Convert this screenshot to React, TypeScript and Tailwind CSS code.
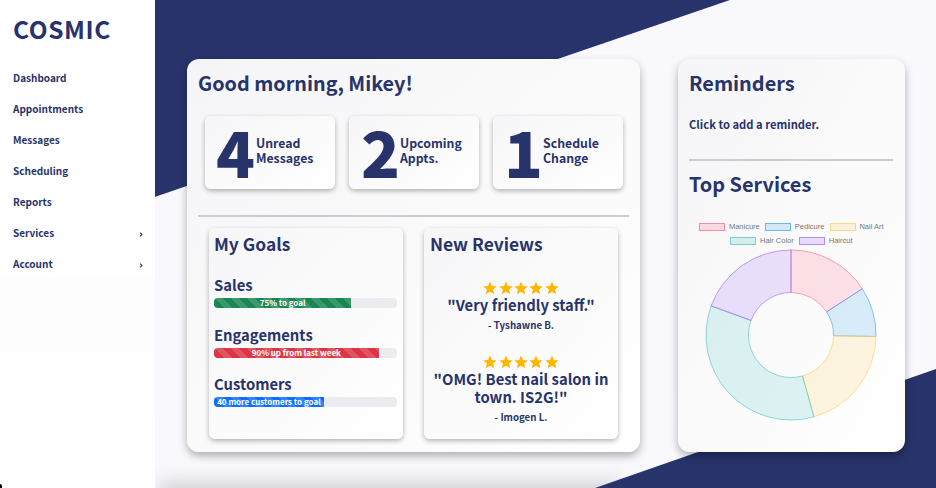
const navItems = ['Dashboard', 'Appointments', 'Messages', 'Scheduling', 'Reports', 'Services', 'Account']

const stats = [
  { num: '4', label: 'Unread Messages', pad: 'pl-[11px]', gap: 'gap-[1px]' },
  { num: '2', label: 'Upcoming Appts.', pad: 'pl-[12px]', gap: 'gap-0' },
  { num: '1', label: 'Schedule Change', pad: 'pl-[11px]', gap: 'gap-0' },
]

const goals = [
  { name: 'Sales', text: '75% to goal', fill: 'w-[75%] bg-[#198754]' },
  { name: 'Engagements', text: '90% up from last week', fill: 'w-[90%] bg-[#dc3545]' },
  { name: 'Customers', text: '40 more customers to goal', fill: 'w-[60%] bg-[#0d6efd]' },
]

const reviews = [
  { quote: '"Very friendly staff."', by: '- Tyshawne B.' },
  { quote: '"OMG! Best nail salon in town. IS2G!"', by: '- Imogen L.' },
]

const legend = [
  { name: 'Manicure', box: 'bg-[#ff638433] border-[#ff6384aa]' },
  { name: 'Pedicure', box: 'bg-[#36a2eb33] border-[#36a2ebaa]' },
  { name: 'Nail Art', box: 'bg-[#ffce5633] border-[#ffce56aa]' },
  { name: 'Hair Color', box: 'bg-[#4bc0c033] border-[#4bc0c0aa]' },
  { name: 'Haircut', box: 'bg-[#9966ff33] border-[#9966ffaa]' },
]

const slices = [
  { from: 0, to: 57, fill: '#ff6384' },
  { from: 57, to: 91, fill: '#36a2eb' },
  { from: 91, to: 164.3, fill: '#ffce56' },
  { from: 164.3, to: 290, fill: '#4bc0c0' },
  { from: 290, to: 360, fill: '#9966ff' },
]

const point = (r: number, deg: number) => {
  const a = (deg * Math.PI) / 180
  return `${(86 + r * Math.sin(a)).toFixed(2)} ${(86 - r * Math.cos(a)).toFixed(2)}`
}

const slicePath = (from: number, to: number) => {
  const large = to - from > 180 ? 1 : 0
  return `M${point(85, from)} A85 85 0 ${large} 1 ${point(85, to)} L${point(42.5, to)} A42.5 42.5 0 ${large} 0 ${point(42.5, from)} Z`
}

const Star = () => (
  <svg viewBox="0 0 24 24" className="w-[14px] h-[14px]" fill="#ffb703">
    <path d="M12 1l3.3 7.6 8.2.7-6.2 5.4 1.9 8L12 18.5 4.8 22.7l1.9-8L.5 9.3l8.2-.7z" />
  </svg>
)

const Stars = () => (
  <div className="flex justify-center gap-[1.3px]">
    <Star />
    <Star />
    <Star />
    <Star />
    <Star />
  </div>
)

const Chevron = () => (
  <svg viewBox="0 0 6 8" className="w-[4px] h-[5px] mt-[4px]" fill="none" stroke="#27336a" strokeWidth="1.8">
    <path d="M1.5 1l3 3-3 3" />
  </svg>
)

const App = () => {
  return (
    <div className="relative flex w-[936px] h-[488px] overflow-hidden bg-[#f9f9fd] text-[#27336a] font-['Noto_Sans_CJK_JP','Source_Sans_Pro',sans-serif]">
      <div className="absolute left-[165px] right-[320px] bottom-[-16px] h-[16px] shadow-[0_0_20px_6px_rgba(0,0,0,0.16)]" />
      <svg className="absolute inset-0" width="936" height="488" viewBox="0 0 936 488">
        <polygon points="0,250 730,0 0,0" fill="#27336a" />
        <polygon points="595,488 936,369 936,488" fill="#27336a" />
      </svg>

      <aside className="relative w-[155px] h-full shrink-0 bg-gradient-to-b from-[#fafafa] to-white">
        <div className="h-[278px] bg-white">
          <div className="pl-[13px] pt-[11px] text-[24.5px] leading-[36px] font-bold tracking-[0.6px]">COSMIC</div>
          <nav className="mt-[15px] pl-[13px] pr-[12px]">
            {navItems.map((item) => (
              <div key={item} className="flex items-center justify-between h-[31px] text-[10px] font-semibold">
                {item}
                {(item === 'Services' || item === 'Account') && <Chevron />}
              </div>
            ))}
          </nav>
        </div>
        <div className="absolute left-0 bottom-0 w-[2px] h-[4px] rounded-tr-[2px] bg-black" />
      </aside>

      <main className="relative flex gap-[38px] pl-[32px] pt-[59px]">
        <section className="w-[453px] h-[393px] px-[11px] rounded-[12px] bg-gradient-to-br from-[#f5f5f7] to-white shadow-[0_4px_8px_rgba(0,0,0,0.3)]">
          <h1 className="pt-[8px] text-[19.8px] leading-[32px] font-semibold">Good morning, Mikey!</h1>
          <div className="flex gap-[14.5px] mt-[17px] pl-[7px]">
            {stats.map((s) => (
              <div
                key={s.num}
                className={`flex items-center w-[129.5px] h-[73px] rounded-[6px] bg-gradient-to-br from-[#f6f6f8] to-white shadow-[0_2px_5px_rgba(0,0,0,0.3)] ${s.pad} ${s.gap}`}
              >
                <span className="text-[64px] leading-[64px] mb-[5px] font-black">{s.num}</span>
                <span className="w-[64px] mb-[4px] text-[12.3px] leading-[15px] font-semibold">{s.label}</span>
              </div>
            ))}
          </div>
          <div className="h-[2px] mt-[26px] bg-[#cbcbd2]" />
          <div className="flex gap-[21px] mt-[11px] pl-[11px]">
            <div className="w-[194px] h-[211px] pl-[5px] pr-[6px] rounded-[6px] bg-gradient-to-br from-[#f6f6f8] to-white shadow-[0_2px_5px_rgba(0,0,0,0.3)]">
              <h2 className="pt-[2px] text-[17.4px] leading-[28px] font-semibold">My Goals</h2>
              <div className="mt-[16px] flex flex-col gap-[15.5px]">
                {goals.map((g) => (
                  <div key={g.name}>
                    <div className="mb-[2px] text-[14.8px] leading-[22px] font-semibold">{g.name}</div>
                    <div className="h-[10px] rounded-[4px] overflow-hidden bg-[#ebecf0]">
                      <div
                        className={`h-full text-center text-[8px] leading-[10px] font-semibold text-white bg-[linear-gradient(45deg,rgba(255,255,255,0.15)_25%,transparent_25%,transparent_50%,rgba(255,255,255,0.15)_50%,rgba(255,255,255,0.15)_75%,transparent_75%,transparent)] bg-[length:16px_16px] ${g.fill}`}
                      >
                        {g.text}
                      </div>
                    </div>
                  </div>
                ))}
              </div>
            </div>
            <div className="w-[194px] h-[211px] px-[6px] rounded-[6px] bg-gradient-to-br from-[#f6f6f8] to-white shadow-[0_2px_5px_rgba(0,0,0,0.3)]">
              <h2 className="pt-[2px] text-[17.4px] leading-[28px] font-semibold">New Reviews</h2>
              <div className="mt-[23px] flex flex-col gap-[22px] text-center">
                {reviews.map((r) => (
                  <div key={r.by}>
                    <Stars />
                    <div className="text-[14.8px] leading-[18px] font-semibold mt-[1px]">{r.quote}</div>
                    <div className="text-[9.7px] leading-[16px] font-semibold mt-[3px]">{r.by}</div>
                  </div>
                ))}
              </div>
            </div>
          </div>
        </section>

        <section className="w-[227px] h-[393px] px-[11px] rounded-[12px] bg-gradient-to-br from-[#f5f5f7] to-white shadow-[0_4px_8px_rgba(0,0,0,0.3)]">
          <h2 className="pt-[8px] text-[19.9px] leading-[32px] font-semibold">Reminders</h2>
          <p className="mt-[16px] text-[11.2px] leading-[18px] font-semibold">Click to add a reminder.</p>
          <div className="h-[2px] mt-[26px] mr-[1px] bg-[#cbcbd2]" />
          <h2 className="mt-[7px] text-[19.9px] leading-[32px] font-semibold">Top Services</h2>
          <div className="flex flex-wrap justify-center gap-x-[5.5px] gap-y-[5px] mt-[22px] -mx-[1px] font-['Liberation_Sans',sans-serif] text-[7.5px] leading-[9px] text-[#777]">
            {legend.map((l) => (
              <div key={l.name} className="flex items-center gap-[3.5px]">
                <span className={`w-[26px] h-[8px] border ${l.box}`} />
                {l.name}
              </div>
            ))}
          </div>
          <svg width="172" height="172" viewBox="0 0 172 172" className="mt-[4px] ml-[16px]">
            {slices.map((s) => (
              <path
                key={s.from}
                d={slicePath(s.from, s.to)}
                fill={s.fill}
                fillOpacity="0.18"
                stroke={s.fill}
                strokeOpacity="0.75"
                strokeWidth="0.8"
              />
            ))}
          </svg>
        </section>
      </main>
    </div>
  )
}

export default App
